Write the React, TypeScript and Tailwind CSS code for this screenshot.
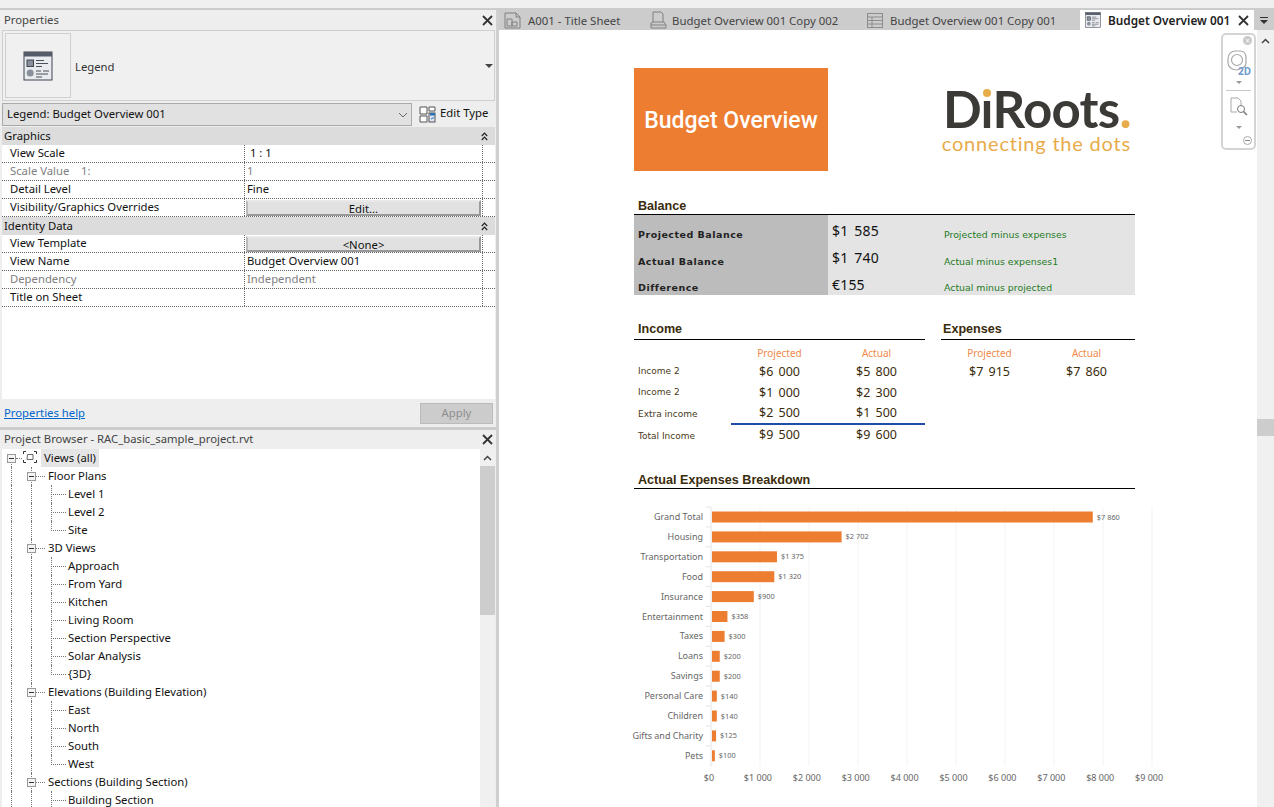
import React from 'react';

const UI = "font-['Noto_Sans',sans-serif]";

const CloseIcon = ({ className = '' }: { className?: string }) => (
  <svg width="11" height="11" viewBox="0 0 11 11" className={className}>
    <path d="M1 1 L10 10 M10 1 L1 10" stroke="#333" strokeWidth="1.8" fill="none" />
  </svg>
);

const DoubleChevron = () => (
  <svg width="7" height="9" viewBox="0 0 7 9">
    <path d="M0.8 4 L3.5 1.2 L6.2 4 M0.8 8 L3.5 5.2 L6.2 8" stroke="#222" strokeWidth="1.2" fill="none" />
  </svg>
);

const LegendIcon = ({ size = 30 }: { size?: number }) => (
  <svg width={size} height={size} viewBox="0 0 30 30">
    <rect x="1" y="1" width="28" height="28" fill="#e9ebee" stroke="#3f4550" strokeWidth="1" />
    <rect x="1" y="1" width="28" height="4.5" fill="#565c68" />
    <rect x="4" y="9" width="6.5" height="6.5" fill="#8a909b" stroke="#3f4550" />
    <circle cx="7.2" cy="22" r="3.5" fill="#8a909b" />
    <path d="M13 9.5h8M13 12.5h12M13 15.5h6M13 20h5M20 20h6M13 23h12M13 26h6" stroke="#4a4f59" strokeWidth="1" />
  </svg>
);

const EditTypeIcon = () => (
  <svg width="17" height="17" viewBox="0 0 17 17">
    <path d="M1 1h7v7H1zM10 1h6v4h-6zM1 10h7v6H1z" fill="#fff" stroke="#555" />
    <rect x="10" y="7" width="6" height="9" fill="#dbe6f2" stroke="#555" />
    <rect x="11" y="7" width="5" height="2.5" fill="#2f6fb5" />
    <path d="M12 13l3-1.5" stroke="#2f6fb5" />
  </svg>
);

const SheetIcon = () => (
  <svg width="17" height="17" viewBox="0 0 17 17" fill="none" stroke="#808080">
    <path d="M1 1h11l4 4v11H1z" />
    <path d="M12 1v4h4M3 7h5v7H3zM8 10h5v4H8z" />
  </svg>
);

const PrintIcon = () => (
  <svg width="17" height="18" viewBox="0 0 17 18" fill="none" stroke="#808080">
    <path d="M3 11V1h8l2 2v8" />
    <path d="M1 17v-5l2-1h11l2 3v3z" />
    <path d="M1 14h15" />
  </svg>
);

const TableIcon = () => (
  <svg width="16" height="15" viewBox="0 0 16 15" fill="none" stroke="#8c8c8c">
    <rect x="0.5" y="0.5" width="15" height="14" />
    <path d="M0.5 4h15M0.5 7.5h15M0.5 11h15M5 4v10.5" />
  </svg>
);

const treeText = 'text-[11.3px] leading-[18px] text-[#111]';

const PropRow = ({
  label,
  value,
  muted,
  button,
}: {
  label: string;
  value?: string;
  muted?: boolean;
  button?: string;
}) => (
  <div className="flex h-[18px] border-b border-dotted border-[#666] whitespace-pre text-[11.3px] leading-[16px] text-[#111]">
    <div className={`w-[243px] shrink-0 border-r border-dotted border-[#666] pl-2 ${muted ? 'text-[#808080]' : ''}`}>
      {label}
    </div>
    {button ? (
      <div className="w-[238px] shrink-0 border-r border-dotted border-[#666] pl-[1px] py-[1px]">
        <div className="h-[16px] w-[235px] bg-[#e1e1e1] border-2 border-t-[#e9e9e9] border-l-[#bbb] border-r-[#999] border-b-[#999] text-center text-[11.3px] leading-[14px]">
          {button}
        </div>
      </div>
    ) : (
      <div className={`w-[238px] shrink-0 border-r border-dotted border-[#666] pl-[2px] ${muted ? 'text-[#808080]' : ''}`}>{value}</div>
    )}
  </div>
);

const SectionHead = ({ title }: { title: string }) => (
  <div className="flex h-[18px] items-center justify-between bg-[#dcdcdc] pl-[2px] pr-[7px] text-[11.3px] text-[#111]">
    <span>{title}</span>
    <DoubleChevron />
  </div>
);

type TreeItem = { text: string; level: 1 | 2; last?: boolean };

const tree: TreeItem[] = [
  { text: 'Floor Plans', level: 1 },
  { text: 'Level 1', level: 2 },
  { text: 'Level 2', level: 2 },
  { text: 'Site', level: 2, last: true },
  { text: '3D Views', level: 1 },
  { text: 'Approach', level: 2 },
  { text: 'From Yard', level: 2 },
  { text: 'Kitchen', level: 2 },
  { text: 'Living Room', level: 2 },
  { text: 'Section Perspective', level: 2 },
  { text: 'Solar Analysis', level: 2 },
  { text: '{3D}', level: 2, last: true },
  { text: 'Elevations (Building Elevation)', level: 1 },
  { text: 'East', level: 2 },
  { text: 'North', level: 2 },
  { text: 'South', level: 2 },
  { text: 'West', level: 2, last: true },
  { text: 'Sections (Building Section)', level: 1 },
  { text: 'Building Section', level: 2 },
];

const MinusBox = ({ left }: { left: string }) => (
  <span className={`absolute top-[5px] ${left} z-10 flex h-[9px] w-[9px] items-center justify-center border border-[#999] bg-[#f4f4f4]`}>
    <span className="h-[1px] w-[5px] bg-[#333]" />
  </span>
);

const TreeRow = ({ item }: { item: TreeItem }) => (
  <div className={`relative h-[18px] ${treeText} ${item.level === 1 ? 'pl-[46px]' : 'pl-[66px]'}`}>
    <span className="absolute left-[9px] top-0 h-[18px] border-l border-dotted border-[#777]" />
    <span className="absolute left-[29px] top-0 h-[18px] border-l border-dotted border-[#777]" />
    {item.level === 1 && (
      <>
        <MinusBox left="left-[25px]" />
        <span className="absolute left-[34px] top-[9px] w-[9px] border-t border-dotted border-[#777]" />
      </>
    )}
    {item.level === 2 && (
      <>
        <span className={`absolute left-[49px] top-0 border-l border-dotted border-[#777] ${item.last ? 'h-[10px]' : 'h-[18px]'}`} />
        <span className="absolute left-[49px] top-[9px] w-[15px] border-t border-dotted border-[#777]" />
      </>
    )}
    {item.text}
  </div>
);

const Properties = () => (
  <div className="flex h-[417px] flex-col bg-[#eeeeee]">
    <div className="flex h-[20px] items-center justify-between pl-1 pr-[3px] text-[11.3px] text-[#444]">
      <span className="pt-[1px]">Properties</span>
      <CloseIcon />
    </div>
    <div className="ml-[2px] mr-[1px] flex h-[71px] items-center border border-[#cfcfcf] bg-[#f0f0f0] pl-[2px]">
      <div className="flex h-[65px] w-[66px] items-center justify-center border border-[#cfcfcf]">
        <LegendIcon />
      </div>
      <span className="ml-1 flex-1 pt-[4px] text-[11.3px] text-[#333]">Legend</span>
      <span className="mr-[1px] h-0 w-0 border-x-[4px] border-t-[4px] border-x-transparent border-t-[#444]" />
    </div>
    <div className="mt-[2px] flex h-[23px] items-center pl-[2px]">
      <div className="flex h-[23px] w-[410px] items-center justify-between border border-[#aaa] bg-[#e1e1e1] pl-1 pr-[3px] text-[11.3px] text-[#111]">
        <span>Legend: Budget Overview 001</span>
        <svg width="10" height="6" viewBox="0 0 10 6">
          <path d="M1 1l4 4 4-4" stroke="#666" fill="none" />
        </svg>
      </div>
      <div className="ml-[7px] flex items-center gap-[4px] text-[11.3px] text-[#111]">
        <EditTypeIcon />
        <span className="pb-[2px]">Edit Type</span>
      </div>
    </div>
    <div className="ml-[2px] mr-[1px] mt-[1px] flex flex-1 flex-col bg-white">
      <SectionHead title="Graphics" />
      <PropRow label="View Scale" value=" 1 : 1" />
      <PropRow label={'Scale Value    1:'} value="1" muted />
      <PropRow label="Detail Level" value="Fine" />
      <PropRow label="Visibility/Graphics Overrides" button="Edit..." />
      <SectionHead title="Identity Data" />
      <PropRow label="View Template" button="<None>" />
      <PropRow label="View Name" value="Budget Overview 001" />
      <PropRow label="Dependency" value="Independent" muted />
      <PropRow label="Title on Sheet" value="" />
    </div>
    <div className="flex h-[28px] items-center justify-between pl-1 pr-[3px]">
      <span className="text-[11.3px] text-[#0066cc] underline">Properties help</span>
      <div className="flex h-[21px] w-[73px] items-center justify-center border border-[#bbb] bg-[#cccccc] text-[11.3px] text-[#8f8f8f]">
        Apply
      </div>
    </div>
  </div>
);

const ProjectBrowser = () => (
  <div className="flex min-h-0 flex-1 flex-col bg-[#eeeeee]">
    <div className="flex h-[19px] shrink-0 items-center justify-between pl-1 pr-[3px] text-[11.3px] text-[#444]">
      <span>Project Browser - RAC_basic_sample_project.rvt</span>
      <CloseIcon />
    </div>
    <div className="ml-[2px] mr-[1px] flex min-h-0 flex-1 bg-white">
      <div className="min-w-0 flex-1 overflow-hidden">
        <div className={`relative h-[18px] pl-[39px] ${treeText}`}>
          <span className="absolute left-[9px] top-[9px] h-[9px] border-l border-dotted border-[#777]" />
          <MinusBox left="left-[5px]" />
          <span className="absolute left-[14px] top-[9px] w-[6px] border-t border-dotted border-[#777]" />
          <svg width="14" height="12" viewBox="0 0 14 12" className="absolute left-[21px] top-[2px]" fill="none" stroke="#333">
            <path d="M0.5 3V0.5H3M11 0.5h2.5V3M13.5 9v2.5H11M3 11.5H0.5V9" />
            <path d="M4.5 3.5h5.5v5H4z" stroke="#666" />
          </svg>
          <span className="inline-block h-[18px] bg-[#e5e5e5] px-[3px]">Views (all)</span>
        </div>
        {tree.map((item, i) => (
          <TreeRow key={i} item={item} />
        ))}
      </div>
      <div className="flex w-[15px] shrink-0 flex-col items-center bg-[#f0f0f0]">
        <div className="flex h-[17px] items-center">
          <svg width="9" height="6" viewBox="0 0 9 6">
            <path d="M1 5l3.5-3.5L8 5" stroke="#444" strokeWidth="1.5" fill="none" />
          </svg>
        </div>
        <div className="h-[149px] w-full bg-[#cdcdcd]" />
      </div>
    </div>
  </div>
);

const Tab = ({
  width,
  icon,
  gap,
  pad,
  text,
}: {
  width: string;
  icon: React.ReactNode;
  gap: string;
  pad: string;
  text: string;
}) => (
  <div className={`flex h-full shrink-0 items-center ${width} ${pad} ${gap} text-[11.4px] text-[#444]`}>
    {icon}
    <span className="pt-[1px]">{text}</span>
  </div>
);

const TabBar = () => (
  <div className="flex h-[20px] shrink-0 bg-[#cccccc]">
    <Tab width="w-[147px]" pad="pl-[5px]" gap="gap-[7px]" icon={<SheetIcon />} text="A001 - Title Sheet" />
    <Tab width="w-[216px]" pad="pl-[4px]" gap="gap-[5px]" icon={<PrintIcon />} text="Budget Overview 001 Copy 002" />
    <Tab width="w-[218px]" pad="pl-[5px]" gap="gap-[7px]" icon={<TableIcon />} text="Budget Overview 001 Copy 001" />
    <div className="flex h-full w-[174px] shrink-0 items-center bg-white pl-[5px] text-[11.8px] font-semibold text-[#222]">
      <LegendIcon size={16} />
      <span className="ml-[7px] pt-[1px]">Budget Overview 001</span>
      <CloseIcon className="ml-[8px]" />
    </div>
    <div className="flex flex-1 flex-col items-center justify-center gap-[2px]">
      <span className="h-[1px] w-[8px] bg-[#333]" />
      <span className="h-0 w-0 border-x-[4px] border-t-[4px] border-x-transparent border-t-[#333]" />
    </div>
  </div>
);

const NavBar = () => (
  <div className="absolute left-[722px] top-[3px] flex h-[117px] w-[35px] flex-col items-center rounded-[5px] border-2 border-[#d4d4d4] bg-white">
    <span className="mt-[1px] ml-[18px] flex h-[9px] w-[9px] items-center justify-center rounded-full bg-[#c8c8c8] text-[8px] leading-none text-white">×</span>
    <svg width="28" height="30" viewBox="0 0 28 30" className="mt-[5px]" fill="none">
      <path d="M3 9c0-5 3-8 8-8h4c4 0 6 3 6 7v5c0 4-3 5-6 6l-3 1c-5 0-9-3-9-7z" stroke="#a8a8a8" strokeWidth="1.2" />
      <circle cx="12" cy="10" r="5.5" stroke="#a8a8a8" strokeWidth="1.2" />
      <text x="13" y="25" fontSize="10" fontWeight="700" fill="#6f9ccb" fontFamily="Noto Sans, sans-serif">2D</text>
    </svg>
    <span className="mt-[1px] h-0 w-0 border-x-[3px] border-t-[3px] border-x-transparent border-t-[#999]" />
    <span className="mt-[6px] h-[1px] w-[25px] bg-[#c8c8c8]" />
    <svg width="18" height="20" viewBox="0 0 18 20" className="mt-[6px]" fill="none" stroke="#a8a8a8">
      <path d="M1 1h7l3 3v4M1 1v14h6" />
      <circle cx="11" cy="12" r="3.5" stroke="#777" />
      <path d="M13.5 14.5L17 18" stroke="#777" strokeWidth="1.5" />
    </svg>
    <span className="mt-[9px] h-0 w-0 border-x-[3px] border-t-[3px] border-x-transparent border-t-[#999]" />
    <span className="mt-[7px] ml-[18px] flex h-[9px] w-[9px] items-center justify-center rounded-full border border-[#aaa]">
      <span className="h-[1px] w-[5px] bg-[#888]" />
    </span>
  </div>
);

const SectionTitle = ({ title, className = 'pl-1 leading-[20px]' }: { title: string; className?: string }) => (
  <div className={`h-[19px] border-b border-black font-['Liberation_Sans',sans-serif] text-[12.6px] font-bold text-[#3a2c0c] ${className}`}>
    {title}
  </div>
);

const balance = [
  { label: 'Projected Balance', value: '$1 585', note: 'Projected minus expenses', h: 'h-[33px]', notePad: 'pb-[6px]', valuePad: 'pb-[7px]' },
  { label: 'Actual Balance', value: '$1 740', note: 'Actual minus expenses1', h: 'h-[27px]', notePad: 'pb-[6px]', valuePad: 'pb-[7px]' },
  { label: 'Difference', value: '€155', note: 'Actual minus projected', h: 'h-[20px]', notePad: 'pb-0', valuePad: 'pb-0' },
];

const BalanceBlock = () => (
  <div className="mt-[25px]">
    <SectionTitle title="Balance" />
    {balance.map((b) => (
      <div key={b.label} className={`flex ${b.h}`}>
        <div className={`flex w-[194px] items-end bg-[#bcbcbc] pl-1 font-['DejaVu_Sans',sans-serif] text-[9.5px] font-bold leading-[14px] tracking-[0.5px] text-[#222] ${b.notePad}`}>
          {b.label}
        </div>
        <div className="flex flex-1 items-end bg-[#e4e4e4] pl-1">
          <span className={`w-[112px] text-[14px] leading-[20px] tracking-[0.2px] text-[#111] [word-spacing:2px] ${b.valuePad}`}>{b.value}</span>
          <span className={`font-['DejaVu_Sans',sans-serif] text-[9.4px] leading-[14px] text-[#1f7a1f] ${b.notePad}`}>{b.note}</span>
        </div>
      </div>
    ))}
  </div>
);

const incomeRows = [
  ['Income 2', '$6 000', '$5 800'],
  ['Income 2', '$1 000', '$2 300'],
  ['Extra income', '$2 500', '$1 500'],
  ['Total Income', '$9 500', '$9 600'],
];

const money = 'text-center text-[12.5px] text-[#3a2c0c] [word-spacing:2px]';
const headCell = 'h-[18px] text-center text-[10px] leading-[21px] text-[#f08a4b]';

const IncomeBlock = () => (
  <div className="mt-[26px] flex gap-[16px]">
    <div className="w-[291px]">
      <SectionTitle title="Income" className="pl-1 leading-[16px]" />
      <div className="mt-[3px] grid grid-cols-3">
        <div className="h-[18px]" />
        <div className={headCell}>Projected</div>
        <div className={headCell}>Actual</div>
        {incomeRows.map((r, i) => {
          const lead = i < 2 ? 'leading-[21px]' : 'leading-[20px]';
          const rule = i === 3 ? 'border-t-2 border-[#1f4ea8]' : '';
          return (
            <React.Fragment key={i}>
              <div className={`pl-1 font-['DejaVu_Sans',sans-serif] text-[9px] text-[#4a3a18] ${lead} ${i === 3 ? 'border-t-2 border-transparent' : ''} ${i >= 2 ? 'translate-y-[1px]' : ''}`}>{r[0]}</div>
              <div className={`${money} ${lead} ${rule}`}>{r[1]}</div>
              <div className={`${money} ${lead} ${rule}`}>{r[2]}</div>
            </React.Fragment>
          );
        })}
      </div>
    </div>
    <div className="flex-1">
      <SectionTitle title="Expenses" className="pl-[2px] leading-[16px]" />
      <div className="mt-[3px] grid grid-cols-2">
        <div className={headCell}>Projected</div>
        <div className={headCell}>Actual</div>
        <div className={`${money} leading-[21px]`}>$7 915</div>
        <div className={`${money} leading-[21px]`}>$7 860</div>
      </div>
    </div>
  </div>
);

const chartRows: [string, number, string][] = [
  ['Grand Total', 7860, '$7 860'],
  ['Housing', 2702, '$2 702'],
  ['Transportation', 1375, '$1 375'],
  ['Food', 1320, '$1 320'],
  ['Insurance', 900, '$900'],
  ['Entertainment', 358, '$358'],
  ['Taxes', 300, '$300'],
  ['Loans', 200, '$200'],
  ['Savings', 200, '$200'],
  ['Personal Care', 140, '$140'],
  ['Children', 140, '$140'],
  ['Gifts and Charity', 125, '$125'],
  ['Pets', 100, '$100'],
];

const Chart = () => (
  <svg viewBox="625 500 550 290" className="-ml-[9px] mt-[11px] h-[290px] w-[550px] font-['Noto_Sans',sans-serif]">
    {Array.from({ length: 9 }, (_, i) => (
      <line key={i} x1={760 + i * 49} x2={760 + i * 49} y1="507" y2="766" stroke="#f3f3f3" />
    ))}
    <line x1="711" x2="711" y1="507" y2="767" stroke="#e4e4e4" />
    {chartRows.map(([name, v, label], i) => {
      const cy = 517 + i * 19.9;
      const end = 710 + v * 0.0487;
      return (
        <g key={name}>
          <line x1="706" x2="711" y1={cy - 10} y2={cy - 10} stroke="#e4e4e4" />
          <text x="703" y={cy + 3} textAnchor="end" fontSize="9" fill="#666">{name}</text>
          <rect x="712" y={cy - 5.5} width={end - 712} height="11" fill="#ed7d31" />
          <text x={end + 4} y={cy + 2.5} fontSize="7.4" fill="#666">{label}</text>
        </g>
      );
    })}
    {['$0', '$1 000', '$2 000', '$3 000', '$4 000', '$5 000', '$6 000', '$7 000', '$8 000', '$9 000'].map((t, i) => (
      <text key={t} x={709 + i * 48.9} y="781" textAnchor="middle" fontSize="9" fill="#666">{t}</text>
    ))}
  </svg>
);

const Logo = () => (
  <div className="flex flex-col items-end whitespace-nowrap">
    <div className="relative font-['Lato',sans-serif] text-[51px] font-bold leading-[46px] tracking-[-0.7px] text-[#3b3a36]">
      DıRoots<span className="text-[#e8ab4a]">.</span>
      <span className="absolute left-[40px] top-[3px] h-[8px] w-[8px] rounded-full bg-[#e8ab4a]" />
    </div>
    <div className="font-['Lato',sans-serif] text-[20px] leading-[22px] tracking-[0.8px] text-[#e8ab4a]">connecting the dots</div>
  </div>
);

const Sheet = () => (
  <div className="relative min-w-0 flex-1 overflow-hidden bg-white">
    <NavBar />
    <div className="ml-[135px] w-[501px] pt-[38px]">
      <div className="flex items-center justify-between">
        <div className="flex h-[103px] w-[194px] items-center justify-center bg-[#ed7d31] pt-[3px] font-['Roboto',sans-serif] text-[23px] font-medium text-white">
          Budget Overview
        </div>
        <div className="mr-[4px]">
          <Logo />
        </div>
      </div>
      <BalanceBlock />
      <IncomeBlock />
      <div className="mt-[25px]">
        <SectionTitle title="Actual Expenses Breakdown" />
      </div>
      <Chart />
    </div>
  </div>
);

export default function App() {
  return (
    <div className={`flex h-[807px] w-[1274px] flex-col overflow-hidden bg-[#f0f0f0] ${UI}`}>
      <div className="h-[8px] shrink-0 bg-[#f0f0f0]" />
      <div className="h-[2px] shrink-0 bg-[#cccccc]" />
      <div className="flex min-h-0 flex-1">
        <div className="flex w-[496px] shrink-0 flex-col">
          <Properties />
          <div className="h-[3px] shrink-0 bg-[#cccccc]" />
          <ProjectBrowser />
        </div>
        <div className="w-[3px] shrink-0 bg-[#d0d0d0]" />
        <div className="flex min-w-0 flex-1 flex-col bg-white">
          <TabBar />
          <div className="flex min-h-0 flex-1">
            <Sheet />
            <div className="flex w-[17px] shrink-0 flex-col items-center bg-[#f0f0f0] pt-[2px]">
              <svg width="9" height="6" viewBox="0 0 9 6" className="mt-[6px]">
                <path d="M1 5l3.5-3.5L8 5" stroke="#444" strokeWidth="1.5" fill="none" />
              </svg>
              <div className="mt-[375px] h-[17px] w-full bg-[#cdcdcd]" />
            </div>
          </div>
        </div>
      </div>
    </div>
  );
}
